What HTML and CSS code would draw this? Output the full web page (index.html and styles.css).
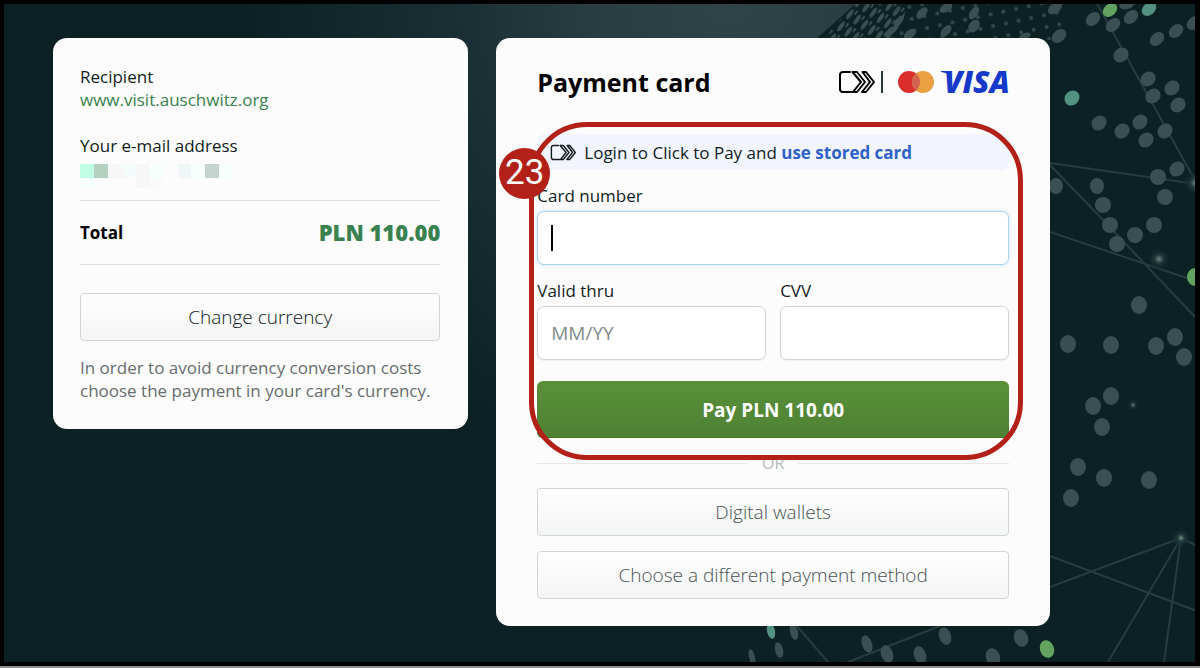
FILE: index.html
```html
<!DOCTYPE html>
<html lang="en">
<head>
<meta charset="utf-8">
<title>Payment card</title>
<link rel="stylesheet" href="styles.css">
</head>
<body>
<svg class="backdrop" viewBox="0 0 1200 668" preserveAspectRatio="xMaxYMin slice" aria-hidden="true">
  <defs>
    <radialGradient id="haze" gradientUnits="userSpaceOnUse" cx="730" cy="0" r="480">
      <stop offset="0" stop-color="#2f4448"/><stop offset=".3" stop-color="#283d41"/><stop offset=".55" stop-color="#1a3034"/><stop offset="1" stop-color="#0b2124"/>
    </radialGradient>
    <radialGradient id="glow"><stop offset="0" stop-color="#6c807f"/><stop offset=".35" stop-color="#22393b"/><stop offset="1" stop-color="#0b2124" stop-opacity="0"/></radialGradient>
    <pattern id="dots" width="13" height="12" patternUnits="userSpaceOnUse" patternTransform="rotate(-12)"><circle cx="4" cy="4" r="2" fill="#324a4d"/></pattern>
    <pattern id="dashes" width="9" height="15" patternUnits="userSpaceOnUse" patternTransform="rotate(36)"><ellipse cx="3" cy="7" rx="2" ry="6" fill="#3a5053"/><ellipse cx="7" cy="1" rx="1" ry="4" fill="#3a5053"/></pattern>
  </defs>
  <rect width="1200" height="668" fill="#0b2124"/>
  <rect width="860" height="480" fill="url(#haze)"/>
  <path d="M860 0H1200V480H860L815 40Z" fill="#0b2124"/>
  <path d="M858 0H910L892 48H815Z" fill="url(#dashes)"/>
  <path d="M900 0H1068L1060 40H880Z" fill="url(#dots)"/>
  <g stroke="#263c3f" stroke-width="2" fill="none">
    <path d="M1095 0L1197 184M1050 163L1197 184M1050 165L1105 222L1197 319M1050 232L1190 279"/>
    <path d="M1181 538L1050 587M1050 556L1197 611M1181 538L1108 662M1181 538L1164 662M1181 538L1197 546M796 625L828 662M940 626L848 662"/>
  </g>
  <g fill="url(#glow)"><circle cx="1159" cy="259" r="12"/><circle cx="1195" cy="183" r="13"/><circle cx="1133" cy="405" r="6"/><circle cx="1181" cy="538" r="10"/></g>
  <circle cx="1181" cy="538" r="1" fill="#4d9464"/>
  <g fill="#3a4f52">
    <ellipse rx="8" ry="5" transform="translate(1055 8) rotate(-40)"/><ellipse rx="8" ry="6" transform="translate(1059 36) rotate(-40)"/>
    <ellipse rx="8" ry="6" transform="translate(1093 19) rotate(-40)"/><ellipse rx="8" ry="6" transform="translate(1113 25) rotate(-40)"/>
    <ellipse rx="8" ry="6" transform="translate(1131 17) rotate(-40)"/><ellipse rx="8" ry="5" transform="translate(1127 4) rotate(-20)"/>
    <ellipse rx="8" ry="6" transform="translate(1157 39) rotate(-40)"/><ellipse rx="8" ry="6" transform="translate(1176 31) rotate(-40)"/>
    <ellipse rx="8" ry="6" transform="translate(1194 23) rotate(-40)"/><ellipse rx="8" ry="7" transform="translate(1121 55) rotate(-40)"/>
    <ellipse rx="8" ry="7" transform="translate(1148 79) rotate(-40)"/><ellipse rx="8" ry="7" transform="translate(1172 88) rotate(-40)"/>
    <ellipse rx="8" ry="7" transform="translate(1153 96) rotate(-40)"/><ellipse rx="8" ry="7" transform="translate(1178 105) rotate(-40)"/>
    <ellipse rx="8" ry="7" transform="translate(1099 123) rotate(-45)"/><ellipse rx="8" ry="7" transform="translate(1122 131) rotate(-45)"/>
    <ellipse rx="8" ry="7" transform="translate(1140 122) rotate(-45)"/><ellipse rx="8" ry="7" transform="translate(1146 140) rotate(-45)"/>
    <ellipse rx="8" ry="7" transform="translate(1165 131) rotate(-45)"/><ellipse rx="8" ry="7" transform="translate(1177 169) rotate(-45)"/>
    <ellipse rx="7" ry="4" transform="translate(974 13) rotate(-55)"/><ellipse rx="7" ry="5" transform="translate(974 26) rotate(-55)"/>
    <ellipse rx="7" ry="4" transform="translate(946 31) rotate(-50)"/><ellipse rx="7" ry="4" transform="translate(946 8) rotate(-30)"/>
    <ellipse rx="7" ry="4" transform="translate(922 13) rotate(-45)"/><ellipse rx="7" ry="4" transform="translate(910 34) rotate(-35)"/>
    <ellipse rx="7" ry="3" transform="translate(899 21) rotate(-50)"/><ellipse rx="7" ry="3" transform="translate(890 32) rotate(-50)"/>
    <ellipse rx="6" ry="3" transform="translate(1025 36) rotate(-20)"/>
    <ellipse cx="1158" cy="177" rx="8" ry="8"/><ellipse cx="1165" cy="197" rx="8" ry="8"/>
    <ellipse cx="1056" cy="186" rx="7" ry="8"/><ellipse cx="1097" cy="186" rx="7" ry="8"/><ellipse cx="1103" cy="205" rx="8" ry="8"/>
    <ellipse cx="1110" cy="225" rx="8" ry="8"/><ellipse cx="1154" cy="225" rx="8" ry="8"/><ellipse cx="1135" cy="235" rx="8" ry="8"/><ellipse cx="1117" cy="244" rx="8" ry="8"/>
    <ellipse cx="1139" cy="305" rx="8" ry="9"/><ellipse cx="1068" cy="344" rx="8" ry="9"/><ellipse cx="1111" cy="345" rx="8" ry="9"/>
    <ellipse cx="1156" cy="346" rx="8" ry="9"/><ellipse cx="1175" cy="337" rx="8" ry="9"/><ellipse cx="1184" cy="357" rx="8" ry="9"/>
    <ellipse cx="1111" cy="396" rx="8" ry="9"/><ellipse cx="1093" cy="406" rx="8" ry="9"/><ellipse cx="1102" cy="427" rx="8" ry="9"/>
    <ellipse cx="1078" cy="467" rx="8" ry="9"/><ellipse cx="1104" cy="478" rx="8" ry="9"/><ellipse cx="1149" cy="480" rx="8" ry="9"/><ellipse cx="1071" cy="498" rx="8" ry="9"/>
    <ellipse rx="3" ry="8" transform="translate(752 657) rotate(-14)"/><ellipse rx="4" ry="8" transform="translate(779 650) rotate(-14)"/>
    <ellipse rx="4" ry="8" transform="translate(794 632) rotate(-14)"/><ellipse rx="5" ry="9" transform="translate(867 644) rotate(-20)"/>
    <ellipse rx="6" ry="9" transform="translate(887 654) rotate(-20)"/><ellipse rx="6" ry="9" transform="translate(920 655) rotate(-20)"/>
    <ellipse rx="6" ry="9" transform="translate(945 636) rotate(-20)"/><ellipse rx="7" ry="9" transform="translate(993 657) rotate(-20)"/>
    <ellipse rx="7" ry="9" transform="translate(1021 638) rotate(-20)"/>
  </g>
  <g fill="#539281"><ellipse rx="8" ry="6" transform="translate(1149 9) rotate(-40)"/><ellipse rx="8" ry="7" transform="translate(1072 98) rotate(-45)"/><ellipse rx="4" ry="8" transform="translate(771 631) rotate(-12)"/></g>
  <g fill="#62a35f"><ellipse rx="8" ry="6" transform="translate(1110 10) rotate(-40)"/><ellipse cx="1195" cy="277" rx="8" ry="9"/><ellipse rx="7" ry="9" transform="translate(1047 649) rotate(-20)"/></g>
</svg>

<svg class="sprite" aria-hidden="true">
  <symbol id="click-to-pay" viewBox="0 0 37 24">
    <path d="M12 2H5Q2 2 2 5V19Q2 22 5 22H15L23 12L14.500 2H19L27 12L19 22H15M24.500 2H28L36 12L28 22H24L32 12L24.500 2" fill="none" stroke="currentColor" stroke-width="2" stroke-linejoin="round" stroke-linecap="round"/>
  </symbol>
</svg>

<main class="checkout">
  <section class="card summary">
    <div class="pair"><span>Recipient</span><a class="site" href="#">www.visit.auschwitz.org</a></div>
    <div class="pair">
      <span>Your e-mail address</span>
      <svg class="redacted" viewBox="0 0 154 24" role="img" aria-label="Hidden e-mail address">
        <path fill="#c0ffe6" d="M0 0h14v14H0z"/><path fill="#b4d0c1" d="M14 0h14v14H14z"/><path fill="#f7f7f7" d="M28 0h14v14H28zM56 0h14v24H56z"/>
        <path fill="#f5fafb" d="M42 0h14v14H42z"/><path fill="#f6fffc" d="M70 0h14v14H70zM0 14h14v10H0zM111 0h14v14h-14zM139 0h13v14h-13z"/>
        <path fill="#f1f7f9" d="M98 0h13v14H98z"/><path fill="#c4d5d0" d="M125 0h14v14h-14z"/><path fill="#fafafa" d="M70 14h14v10H70z"/>
      </svg>
    </div>
    <div class="total"><span>Total</span><strong class="amount">PLN 110.00</strong></div>
    <button class="btn btn-dark" type="button">Change currency</button>
    <p class="hint">In order to avoid currency conversion costs choose the payment in your card's currency.</p>
  </section>

  <section class="card payment">
    <header class="head">
      <h1>Payment card</h1>
      <div class="brands">
        <svg class="ctp" role="img" aria-label="Click to Pay"><use href="#click-to-pay"/></svg>
        <span class="bar"></span>
        <svg class="mastercard" viewBox="0 0 36 22" role="img" aria-label="Mastercard"><circle cx="11" cy="11" r="11" fill="#db2d2b"/><circle cx="25" cy="11" r="11" fill="#eaa040"/><path d="M18 2.500a11 11 0 0 1 0 17a11 11 0 0 1 0-17z" fill="#d0624f"/></svg>
        <svg class="visa" viewBox="0 0 68 24" role="img" aria-label="Visa"><text class="visa-word" x="3" y="23">VISA</text><path d="M0 1H9L11 9Q8 3 0 2Z" fill="#1739c9"/></svg>
      </div>
    </header>

    <form class="pay-form">
      <div class="notice">
        <svg class="ctp-small" aria-hidden="true"><use href="#click-to-pay"/></svg>
        <span>Login to Click to Pay and <a href="#">use stored card</a></span>
      </div>
      <div class="field">
        <label for="number">Card number</label>
        <div class="caret-box"><input class="active" id="number" type="text" inputmode="numeric"><span class="caret"></span></div>
      </div>
      <div class="row">
        <div class="field"><label for="valid">Valid thru</label><input id="valid" type="text" placeholder="MM/YY"></div>
        <div class="field"><label for="cvv">CVV</label><input id="cvv" type="text"></div>
      </div>
      <button class="submit" type="button">Pay PLN 110.00</button>
      <div class="callout"></div>
      <span class="step">23</span>
    </form>

    <div class="or"><span>OR</span></div>
    <div class="others">
      <button class="btn" type="button">Digital wallets</button>
      <button class="btn" type="button">Choose a different payment method</button>
    </div>
  </section>
</main>
<div class="frame"></div>
</body>
</html>
```
FILE: styles.css
```css
* { box-sizing: border-box; }

body {
  margin: 0;
  min-height: 100vh;
  position: relative;
  overflow-x: hidden;
  background: #0b2124;
  color: #111c1d;
  font: 17px/23px "Open Sans", "Noto Sans", sans-serif;
}

.backdrop { position: absolute; inset: 0; width: 100%; height: 100%; }
.sprite { position: absolute; width: 0; height: 0; }

.frame {
  position: absolute;
  inset: 0;
  border: solid #000;
  border-width: 4px 5px 4px 4px;
  border-bottom-width: 4px;
  margin-bottom: 2px;
  outline: 2px solid #8c8c8c;
  pointer-events: none;
}

.checkout {
  position: relative;
  display: grid;
  grid-template-columns: 3fr 4fr;
  gap: 28px;
  align-items: start;
  padding: 38px 150px 40px 53px;
}

.card { background: #fcfcfc; border-radius: 14px; }
.summary { padding: 27px 28px 27px 27px; }
.payment { padding: 26px 41px 27px; }

.pair { display: flex; flex-direction: column; align-items: flex-start; }
.pair + .pair { margin-top: 23px; }
.site { color: #39814f; text-decoration: none; }
.redacted { width: 154px; height: 24px; margin-top: 7px; }

.total {
  display: flex;
  justify-content: space-between;
  align-items: center;
  height: 65px;
  margin-top: 12px;
  border: solid #dedfdf;
  border-width: 1px 0;
  font-weight: 700;
  color: #000;
}
.amount { font-size: 22px; color: #39814f; }

.btn {
  display: block;
  width: 100%;
  height: 48px;
  border: 1px solid #d3d5d5;
  border-radius: 4px;
  background: linear-gradient(#fefefe, #f4f5f5);
  color: #485152;
  font: 300 19px/24px "Open Sans", "Noto Sans", sans-serif;
}
.btn-dark { margin-top: 28px; color: #0c1819; }
.hint { margin: 15px 0 0; color: #666d6d; }

.head { display: flex; justify-content: space-between; align-items: center; height: 36px; margin-bottom: 34px; }
h1 { margin: 0; font-size: 25px; line-height: 36px; color: #000; }
.brands { display: flex; align-items: center; color: #000; }
.ctp { width: 37px; height: 24px; }
.bar { width: 2px; height: 22px; margin: 0 15px 0 6px; background: #26383a; }
.mastercard { width: 36px; height: 22px; }
.visa { width: 68px; height: 24px; margin-left: 7px; overflow: visible; }
.visa-word { font: italic 800 30px "Open Sans", sans-serif; fill: #1739c9; }

.pay-form { position: relative; }
.notice {
  display: flex;
  align-items: center;
  gap: 8px;
  height: 36px;
  margin-bottom: 15px;
  padding: 0 13px;
  border-radius: 7px;
  background: #f3f5fe;
}
.notice a { color: #2f62ca; font-weight: 700; text-decoration: none; }
.ctp-small { width: 26px; height: 17px; }

.field { display: flex; flex-direction: column; gap: 4px; }
.field label { line-height: 22px; }
.row { display: grid; grid-template-columns: 1fr 1fr; gap: 14px; margin-top: 15px; }

input {
  width: 100%;
  height: 54px;
  padding: 0 13px;
  border: 1px solid #d3d5d5;
  border-radius: 7px;
  background: #fff;
  box-shadow: 0 1px 2px #eee;
  color: #111c1d;
  font: 19px/24px "Open Sans", "Noto Sans", sans-serif;
  outline: none;
}
input::placeholder { color: #858b8b; opacity: 1; }
input.active { display: block; border-color: #a9d1f0; box-shadow: 0 0 4px #cfe5f6; }
.caret-box { position: relative; }
.caret { position: absolute; left: 14px; top: 14px; width: 2px; height: 26px; background: #000; }

.submit {
  display: block;
  width: 100%;
  height: 57px;
  margin-top: 21px;
  border: 0;
  border-radius: 6px;
  background: linear-gradient(#599139, #4f8034);
  box-shadow: inset 0 -1px #45762d;
  color: #fff;
  font: 700 19px/24px "Open Sans", "Noto Sans", sans-serif;
}

.callout {
  position: absolute;
  inset: -12px -14px -22px -8px;
  border: 5px solid #b22018;
  border-radius: 58px;
  pointer-events: none;
}
.step {
  position: absolute;
  left: -38px;
  top: 14px;
  width: 51px;
  height: 51px;
  border-radius: 50%;
  background: #b22018;
  color: #fff;
  font: 35px/50px Roboto, sans-serif;
  text-align: center;
}

.or { display: flex; align-items: center; gap: 14px; height: 50px; color: #b6baba; font-size: 16px; }
.or::before, .or::after { content: ""; flex: 1; height: 1px; background: #e6e7e7; }
.others { display: grid; gap: 15px; }
```
